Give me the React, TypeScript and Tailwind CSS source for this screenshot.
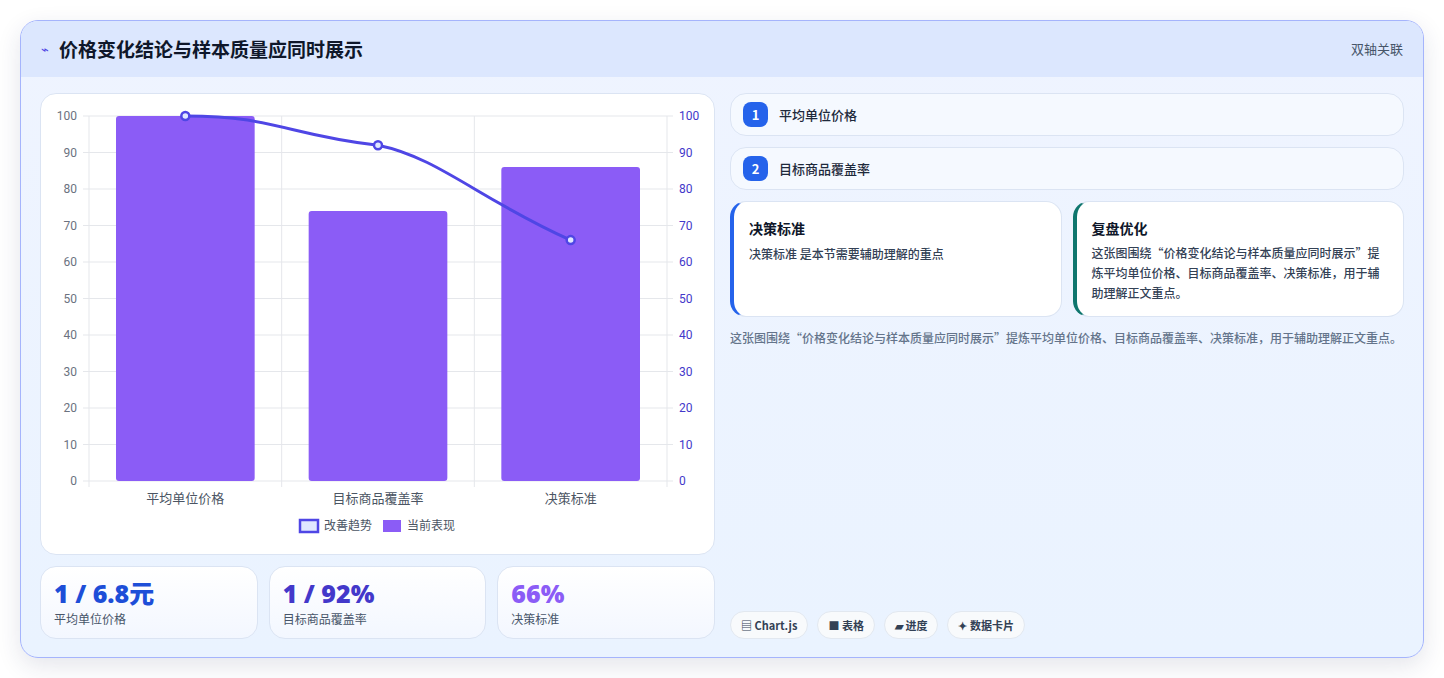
import React from "react";

const W = 674, H = 461;
const L = 48, R = 626, T = 22, B = 387;
const y = (v: number) => B - (v / 100) * (B - T);
const cw = (R - L) / 3;
const cats = ["平均单位价格", "目标商品覆盖率", "决策标准"];
const bars = [100, 74, 86];
const line = [100, 92, 66];

function Chart() {
  const pts = line.map((v, i) => [L + cw * (i + 0.5), y(v)]);
  const d = `M${pts[0][0]},${pts[0][1]} C${pts[0][0] + 90},${pts[0][1]} ${pts[1][0] - 90},${pts[1][1] - 10} ${pts[1][0]},${pts[1][1]} C${pts[1][0] + 60},${pts[1][1] + 12} ${pts[2][0] - 90},${pts[2][1] - 40} ${pts[2][0]},${pts[2][1]}`;
  return (
    <svg width={W} height={H - 2} style={{ fontFamily: "Roboto, 'Liberation Sans', sans-serif" }}>
      {Array.from({ length: 11 }, (_, i) => i * 10).map((v) => (
        <g key={v}>
          <line x1={L - 6} x2={R + 6} y1={y(v)} y2={y(v)} stroke="#e5e7eb" />
          <text x={L - 12} y={y(v) + 4} textAnchor="end" fontSize="12" fill="#6b7280">{v}</text>
          <text x={R + 12} y={y(v) + 4} fontSize="12" fill="#4338ca">{v}</text>
        </g>
      ))}
      {[0, 1, 2, 3].map((i) => (
        <line key={i} x1={L + cw * i} x2={L + cw * i} y1={T} y2={B + 6} stroke="#e5e7eb" />
      ))}
      {bars.map((v, i) => (
        <rect key={i} x={L + cw * i + 27} y={y(v)} width={cw - 54} height={B - y(v)} rx="3" fill="#8b5cf6" />
      ))}
      <path d={d} fill="none" stroke="#4f46e5" strokeWidth="3" />
      {pts.map((p, i) => (
        <circle key={i} cx={p[0]} cy={p[1]} r="4" fill="#e0e7ff" stroke="#4f46e5" strokeWidth="2.5" />
      ))}
      {cats.map((c, i) => (
        <text key={c} x={L + cw * (i + 0.5)} y={409} textAnchor="middle" fontSize="13" fill="#4b5563" fontFamily="'Noto Sans CJK SC', sans-serif">{c}</text>
      ))}
      <rect x={259} y={426} width={18} height={12} fill="#e0e7ff" stroke="#4f46e5" strokeWidth="2.5" />
      <text x={283} y={436} fontSize="12" fill="#4b5563" fontFamily="'Noto Sans CJK SC', sans-serif">改善趋势</text>
      <rect x={342} y={426} width={18} height={12} fill="#8b5cf6" />
      <text x={366} y={436} fontSize="12" fill="#4b5563" fontFamily="'Noto Sans CJK SC', sans-serif">当前表现</text>
    </svg>
  );
}

function Stat({ v, l, c }: { v: string; l: string; c: string }) {
  return (
    <div className="flex-1 h-[73px] rounded-2xl border border-[#dbe4f3] bg-gradient-to-b from-white to-[#f3f7ff] px-[13px] pt-[10px]">
      <div className={`text-[25px] font-extrabold leading-[32px] ${c}`} style={{ fontFamily: "'Open Sans','Noto Sans CJK SC',sans-serif" }}>{v}</div>
      <div className="text-[12px] text-[#475569] mt-[1px]">{l}</div>
    </div>
  );
}

export default function App() {
  return (
    <div className="w-[1444px] h-[678px] bg-white p-[20px] pb-[20px]" style={{ fontFamily: "'Noto Sans CJK SC','Noto Sans',sans-serif" }}>
      <div className="h-[638px] rounded-[18px] border border-[#a5b4fc] overflow-hidden bg-gradient-to-b from-[#eff4ff] to-[#eaf3ff] shadow-[0_8px_24px_rgba(30,41,90,0.12)] flex flex-col">
        <div className="h-[56px] bg-[#dce7fe] flex items-center px-[20px] shrink-0">
          <span className="text-[#4f46e5] text-[13px] mr-[10px]">⌁</span>
          <span className="text-[19px] font-bold text-[#0f172a]">价格变化结论与样本质量应同时展示</span>
          <span className="ml-auto text-[13px] text-[#475569]">双轴关联</span>
        </div>
        <div className="flex gap-[15px] px-[19px] pt-[16px] pb-[18px] flex-1">
          <div className="w-[675px] flex flex-col gap-[11px]">
            <div className="h-[462px] rounded-2xl border border-[#dbe4f3] bg-white overflow-hidden">
              <Chart />
            </div>
            <div className="flex gap-[11px]">
              <Stat v="1 / 6.8元" l="平均单位价格" c="text-[#1d4ed8]" />
              <Stat v="1 / 92%" l="目标商品覆盖率" c="text-[#4338ca]" />
              <Stat v="66%" l="决策标准" c="text-[#8b5cf6]" />
            </div>
          </div>
          <div className="flex-1 flex flex-col">
            {["平均单位价格", "目标商品覆盖率"].map((t, i) => (
              <div key={t} className="h-[43px] mb-[11px] rounded-2xl border border-[#dbe4f3] bg-[#f5f9ff] flex items-center px-[12px]">
                <span className="w-[25px] h-[25px] rounded-lg bg-[#2563eb] text-white text-[13px] font-bold flex items-center justify-center">{i + 1}</span>
                <span className="ml-[11px] text-[13px] font-medium text-[#1e293b]">{t}</span>
              </div>
            ))}
            <div className="flex gap-[11px]">
              <div className="flex-1 h-[116px] rounded-2xl border border-[#dbe4f3] border-l-4 border-l-[#2563eb] bg-white px-[15px] pt-[16px]">
                <div className="text-[14px] font-bold text-[#0f172a]">决策标准</div>
                <div className="text-[12px] font-medium text-[#334155] mt-[6px]">决策标准 是本节需要辅助理解的重点</div>
              </div>
              <div className="flex-1 h-[116px] rounded-2xl border border-[#dbe4f3] border-l-4 border-l-[#0f766e] bg-white px-[15px] pt-[16px]">
                <div className="text-[14px] font-bold text-[#0f172a]">复盘优化</div>
                <div className="text-[12px] font-medium leading-[20px] text-[#334155] mt-[4px]">这张图围绕“价格变化结论与样本质量应同时展示”提炼平均单位价格、目标商品覆盖率、决策标准，用于辅助理解正文重点。</div>
              </div>
            </div>
            <div className="text-[12px] font-medium leading-[20px] text-[#64748b] mt-[11px]">这张图围绕“价格变化结论与样本质量应同时展示”提炼平均单位价格、目标商品覆盖率、决策标准，用于辅助理解正文重点。</div>
            <div className="mt-auto flex gap-[9px]">
              {["▤ Chart.js", "■ 表格", "▰ 进度", "✦ 数据卡片"].map((t) => (
                <span key={t} className="h-[28px] px-[10px] rounded-full border border-[#e2e8f0] bg-[#f8fafc] text-[11px] font-bold text-[#334155] flex items-center">{t}</span>
              ))}
            </div>
          </div>
        </div>
      </div>
    </div>
  );
}
